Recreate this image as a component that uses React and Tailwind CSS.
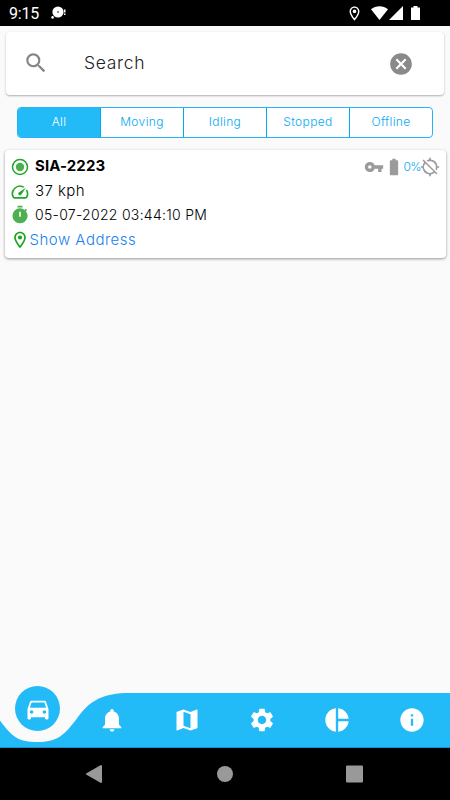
import { useState } from "react";
import {
    MdSearch,
    MdCancel,
    MdSpeed,
    MdTimer,
    MdOutlineLocationOn,
    MdVpnKey,
    MdBatteryFull,
    MdLocationDisabled,
    MdDirectionsCar,
    MdNotifications,
    MdMap,
    MdSettings,
    MdPieChart,
    MdInfo,
} from "react-icons/md";

const tabs = ["All", "Moving", "Idling", "Stopped", "Offline"];
const navIcons = [MdNotifications, MdMap, MdSettings, MdPieChart, MdInfo];

const StatusBar = () => (
    <div className="h-[26px] shrink-0 bg-black text-white flex items-center pl-[9px] pr-[30px]">
        <span className="font-[Roboto] text-[16px] tracking-[-0.2px] leading-[26px] pt-[2px] w-[42px]">9:15</span>
        <svg className="w-[16px] h-[14px]" viewBox="0 0 16 14">
            <circle cx="7" cy="6" r="5.6" fill="#fff" />
            <circle cx="7" cy="6" r="0.8" fill="#000" />
            <circle cx="1.6" cy="11.4" r="1.3" fill="#fff" />
            <path d="M13 3.500h1.500v3H13zM13 7.500h1.500v1.500H13z" fill="#fff" />
        </svg>
        <div className="ml-auto flex items-center">
            <MdOutlineLocationOn size={17} className="mr-[8px]" />
            <svg className="w-[17px] h-[14px] mr-[1px]" viewBox="0 0 17 14">
                <path d="M0 3.2C4.8-.9 12.2-.9 17 3.2L8.5 14z" fill="#fff" />
            </svg>
            <svg className="w-[14px] h-[14px] mr-[8px]" viewBox="0 0 14 14">
                <path d="M14 0v14H0z" fill="#fff" />
            </svg>
            <svg className="w-[9px] h-[14px]" viewBox="0 0 9 14">
                <path d="M2.5 0h4v1.4H9V14H0V1.4h2.5z" fill="#fff" />
            </svg>
        </div>
    </div>
);

const SearchBar = () => (
    <div className="mx-[6px] mt-[6px] h-[63px] rounded-[4px] bg-white shadow-[0_1px_2px_rgba(0,0,0,0.3)] flex items-center pl-[17px] pr-[30px]">
        <MdSearch size={26} className="text-[#858585] -mt-[2px]" />
        <span className="ml-[35px] text-[17.500px] tracking-[0.7px] font-light text-[#222]">Search</span>
        <MdCancel size={26} className="ml-auto text-[#8a8a8a]" />
    </div>
);

const VehicleCard = () => (
    <div className="ml-[5px] mr-[4.500px] mt-[11.500px] h-[108px] rounded-[4px] bg-white shadow-[0_1px_3px_rgba(0,0,0,0.4)] pl-[5px] pr-[6px] pt-[4px] text-[15px] text-black">
        <div className="flex items-center h-[26px]">
            <svg className="w-[20px] h-[20px]" viewBox="0 0 20 20">
                <circle cx="10" cy="10" r="7.5" fill="none" stroke="#22a628" strokeWidth="1.5" />
                <circle cx="10" cy="10" r="4.2" fill="#4caf50" />
            </svg>
            <span className="ml-[5px] font-bold tracking-[0.1px]">SIA-2223</span>
            <div className="ml-auto flex items-center text-[#9b9b9b]">
                <MdVpnKey size={20} />
                <MdBatteryFull size={20} />
                <span className="w-[16px] text-[12px] tracking-[-0.7px] font-light text-[#03a9f4]">0%</span>
                <MdLocationDisabled size={20} />
            </div>
        </div>
        <div className="flex items-center h-[24px]">
            <MdSpeed size={20} className="text-[#22a628]" />
            <span className="ml-[5px] font-light tracking-[0.4px]">37 kph</span>
        </div>
        <div className="flex items-center h-[24px] -mt-px mb-px">
            <MdTimer size={20} className="text-[#4caf50]" />
            <span className="ml-[5px] text-[14px] tracking-[0.29px] font-light">05-07-2022 03:44:10 PM</span>
        </div>
        <div className="flex items-center h-[25px]">
            <MdOutlineLocationOn size={20} className="text-[#16a51c]" />
            <span className="-ml-[0.500px] text-[15px] tracking-[0.5px] font-light text-[#1a80f0]">Show Address</span>
        </div>
    </div>
);

const BottomNav = () => (
    <div className="relative mt-auto h-[62px] shrink-0 flex">
        <svg className="absolute inset-0 w-full h-full" viewBox="0 0 450 62">
            <path
                d="M0 34.5C13 52 19 56 37.5 56C57 56 64 50 78 31C90 14.500 103 7 130 7H450V62H0z"
                fill="#23baf8"
            />
            <path d="M0 61.5H450" stroke="#168fcc" />
        </svg>
        <div className="relative w-[75px] flex justify-center">
            <div className="w-[45px] h-[45px] rounded-full bg-[#23baf8] text-white flex items-center justify-center">
                <MdDirectionsCar size={28} />
            </div>
        </div>
        {navIcons.map((Icon, i) => (
            <div key={i} className="relative w-[75px] pr-px pt-[20px] flex justify-center text-white">
                <Icon size={28} />
            </div>
        ))}
    </div>
);

const App = () => {
    const [active, setActive] = useState("All");

    return (
        <div className="w-[450px] h-[800px] overflow-hidden bg-[#fafafa] flex flex-col font-['Inter',sans-serif]">
            <StatusBar />
            <SearchBar />
            <div className="mx-[17px] mt-[12px] h-[31px] w-[416px] flex rounded-[4px] border border-[#23b4f5] overflow-hidden bg-white divide-x divide-[#03a9f4]">
                {tabs.map((tab) => (
                    <button
                        key={tab}
                        onClick={() => setActive(tab)}
                        className={`flex-1 pb-px text-[12px] font-light tracking-[0.35px] ${
                            active === tab ? "bg-[#23baf8] text-white" : "text-[#03a9f4]"
                        }`}
                    >
                        {tab}
                    </button>
                ))}
            </div>
            <VehicleCard />
            <BottomNav />
            {/* android system buttons */}
            <div className="h-[52px] shrink-0 bg-black">
                <svg className="w-[450px] h-[52px]" viewBox="0 0 450 52" fill="#999">
                    <path d="M87 26l14-8v16z" stroke="#999" strokeWidth="2" strokeLinejoin="round" />
                    <circle cx="225" cy="26" r="8" />
                    <rect x="346" y="17.500" width="17" height="17" rx="1" />
                </svg>
            </div>
        </div>
    );
};

export default App;
